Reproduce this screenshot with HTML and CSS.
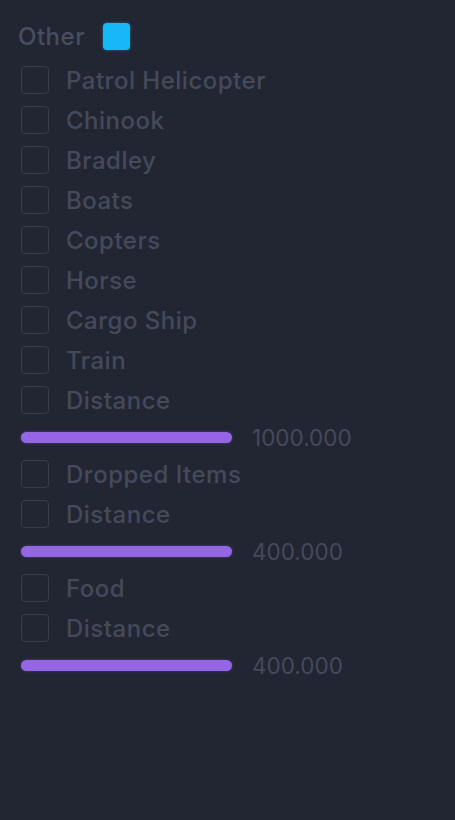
FILE: index.html
```html
<!DOCTYPE html>
<html>
<head>
<meta charset="utf-8">
<link rel="stylesheet" href="styles.css">
</head>
<body>
<div class="panel">
  <div class="header">
    <span class="title">Other</span>
    <span class="swatch"></span>
  </div>
  <div class="row"><span class="box"></span><span class="label">Patrol Helicopter</span></div>
  <div class="row"><span class="box"></span><span class="label">Chinook</span></div>
  <div class="row"><span class="box"></span><span class="label">Bradley</span></div>
  <div class="row"><span class="box"></span><span class="label">Boats</span></div>
  <div class="row"><span class="box"></span><span class="label">Copters</span></div>
  <div class="row"><span class="box"></span><span class="label">Horse</span></div>
  <div class="row"><span class="box"></span><span class="label">Cargo Ship</span></div>
  <div class="row"><span class="box"></span><span class="label">Train</span></div>
  <div class="row"><span class="box"></span><span class="label">Distance</span></div>
  <div class="slider-row"><span class="slider"></span><span class="value">1000.000</span></div>
  <div class="row"><span class="box"></span><span class="label">Dropped Items</span></div>
  <div class="row"><span class="box"></span><span class="label">Distance</span></div>
  <div class="slider-row"><span class="slider"></span><span class="value">400.000</span></div>
  <div class="row"><span class="box"></span><span class="label">Food</span></div>
  <div class="row"><span class="box"></span><span class="label">Distance</span></div>
  <div class="slider-row"><span class="slider"></span><span class="value">400.000</span></div>
</div>
</body>
</html>
```

FILE: styles.css
```css
html, body {
  margin: 0;
  padding: 0;
  background: #222633;
  height: 100%;
}
body {
  font-family: Inter, "Noto Sans", sans-serif;
  color: #454a5b;
}
.panel {
  padding: 12px 0 0 21px;
  display: flex;
  flex-direction: column;
}
.header {
  height: 48px;
  display: flex;
  align-items: center;
  margin-left: -3px;
}
.title {
  font-size: 24px;
  font-weight: 500;
  letter-spacing: 0.5px;
  color: #484d5f;
}
.swatch {
  width: 27px;
  height: 27px;
  margin-left: 18px;
  background: #16b8f6;
  border-radius: 4px;
  box-shadow: 0 0 3px rgba(22, 184, 246, 0.5);
}
.row {
  height: 40px;
  display: flex;
  align-items: center;
}
.box {
  width: 26px;
  height: 26px;
  border: 1.5px solid #393d4b;
  border-radius: 4px;
  flex-shrink: 0;
}
.label {
  margin-left: 17px;
  font-size: 24px;
  font-weight: 500;
  letter-spacing: 0.5px;
}
.slider-row {
  height: 34px;
  display: flex;
  align-items: center;
}
.slider {
  width: 211px;
  height: 11px;
  border-radius: 6px;
  background: #9466e3;
  box-shadow: 0 0 3px rgba(148, 102, 227, 0.45);
}
.value {
  margin-left: 20px;
  font-size: 22.5px;
}
```
